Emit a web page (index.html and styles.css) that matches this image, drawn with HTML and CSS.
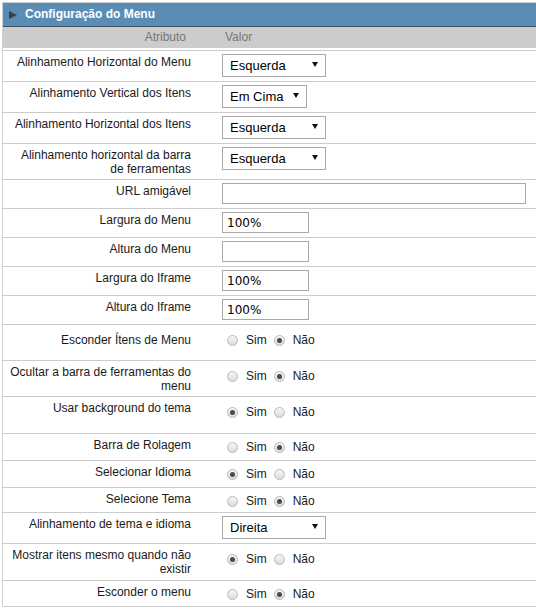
FILE: index.html
```html
<!DOCTYPE html>
<html lang="pt">
<head>
<meta charset="utf-8">
<title>Configuração do Menu</title>
<link rel="stylesheet" href="styles.css">
</head>
<body>
<div class="panel">
  <div class="title"><span class="title-arrow"></span>Configuração do Menu</div>
  <div class="head">
    <div class="head-label">Atributo</div>
    <div class="head-value">Valor</div>
  </div>
  <div class="rows">
    <div class="row h31">
      <div class="label">Alinhamento Horizontal do Menu</div>
      <div class="value"><span class="select w104"><select><option>Esquerda</option></select></span></div>
    </div>
    <div class="row h31">
      <div class="label">Alinhamento Vertical dos Itens</div>
      <div class="value"><span class="select w85"><select><option>Em Cima</option></select></span></div>
    </div>
    <div class="row h31">
      <div class="label">Alinhamento Horizontal dos Itens</div>
      <div class="value"><span class="select w104"><select><option>Esquerda</option></select></span></div>
    </div>
    <div class="row h36">
      <div class="label">Alinhamento horizontal da barra de ferramentas</div>
      <div class="value"><span class="select w104"><select><option>Esquerda</option></select></span></div>
    </div>
    <div class="row h29">
      <div class="label">URL amigável</div>
      <div class="value"><input class="text wide" type="text" value=""></div>
    </div>
    <div class="row h29">
      <div class="label">Largura do Menu</div>
      <div class="value"><input class="text" type="text" value="100%"></div>
    </div>
    <div class="row h29">
      <div class="label">Altura do Menu</div>
      <div class="value"><input class="text" type="text" value=""></div>
    </div>
    <div class="row h29">
      <div class="label">Largura do Iframe</div>
      <div class="value"><input class="text" type="text" value="100%"></div>
    </div>
    <div class="row h29">
      <div class="label">Altura do Iframe</div>
      <div class="value"><input class="text" type="text" value="100%"></div>
    </div>
    <div class="row h36">
      <div class="label low">Esconder Ítens de Menu</div>
      <div class="value radios"><input class="radio" type="radio" name="r1"><span class="opt">Sim</span><input class="radio" type="radio" name="r1" checked><span class="opt">Não</span></div>
    </div>
    <div class="row h36">
      <div class="label">Ocultar a barra de ferramentas do menu</div>
      <div class="value radios"><input class="radio" type="radio" name="r2"><span class="opt">Sim</span><input class="radio" type="radio" name="r2" checked><span class="opt">Não</span></div>
    </div>
    <div class="row h37">
      <div class="label">Usar background do tema</div>
      <div class="value radios"><input class="radio" type="radio" name="r3" checked><span class="opt">Sim</span><input class="radio" type="radio" name="r3"><span class="opt">Não</span></div>
    </div>
    <div class="row h27 compact">
      <div class="label">Barra de Rolagem</div>
      <div class="value radios"><input class="radio" type="radio" name="r4"><span class="opt">Sim</span><input class="radio" type="radio" name="r4" checked><span class="opt">Não</span></div>
    </div>
    <div class="row h27 compact">
      <div class="label">Selecionar Idioma</div>
      <div class="value radios"><input class="radio" type="radio" name="r5" checked><span class="opt">Sim</span><input class="radio" type="radio" name="r5"><span class="opt">Não</span></div>
    </div>
    <div class="row h25 compact">
      <div class="label">Selecione Tema</div>
      <div class="value radios"><input class="radio" type="radio" name="r6"><span class="opt">Sim</span><input class="radio" type="radio" name="r6" checked><span class="opt">Não</span></div>
    </div>
    <div class="row h31">
      <div class="label">Alinhamento de tema e idioma</div>
      <div class="value"><span class="select w104"><select><option>Direita</option></select></span></div>
    </div>
    <div class="row h37">
      <div class="label">Mostrar itens mesmo quando não existir</div>
      <div class="value radios"><input class="radio" type="radio" name="r7" checked><span class="opt">Sim</span><input class="radio" type="radio" name="r7"><span class="opt">Não</span></div>
    </div>
    <div class="row h25 compact">
      <div class="label">Esconder o menu</div>
      <div class="value radios"><input class="radio" type="radio" name="r8"><span class="opt">Sim</span><input class="radio" type="radio" name="r8" checked><span class="opt">Não</span></div>
    </div>
  </div>
</div>
</body>
</html>
```

FILE: styles.css
```css
html, body {
  margin: 0;
  padding: 0;
  overflow: hidden;
  background: #fff;
}

body {
  font-family: "Liberation Sans", Arial, sans-serif;
  font-size: 12px;
  color: #1a1a1a;
}

.panel {
  box-sizing: border-box;
  width: 535px;
  margin: 2px 0 0 2px;
  border: 1px solid #cfcfcf;
}

.title {
  display: flex;
  align-items: center;
  height: 23px;
  background: #5a8db6;
  border-bottom: 1px solid #3b4d5b;
  color: #fff;
  font-weight: bold;
  font-size: 12px;
  line-height: 23px;
}

.title-arrow {
  width: 0;
  height: 0;
  border-top: 4px solid transparent;
  border-bottom: 4px solid transparent;
  border-left: 8px solid #3e3e3e;
  margin: 0 8px 0 6px;
}

.head {
  display: grid;
  grid-template-columns: 215px 1fr;
  height: 21px;
  line-height: 21px;
  background: #cccccc;
  border-bottom: 2px solid #fff;
  color: #777;
}

.head-label {
  text-align: right;
  padding-right: 32px;
}

.head-value {
  padding-left: 7px;
}

.rows {
  border-top: 1px solid #cccccc;
}

.row {
  box-sizing: border-box;
  display: grid;
  grid-template-columns: 215px 1fr;
  border-bottom: 1px solid #cccccc;
}

.row:last-child {
  border-bottom: none;
}

.h25 { height: 25px; }
.h27 { height: 27px; }
.h29 { height: 29px; }
.h31 { height: 31px; }
.h36 { height: 36px; }
.h37 { height: 37px; }

.label {
  text-align: right;
  padding: 4px 27px 0 4px;
}

.label.low {
  padding-top: 8px;
}

.value {
  padding: 3px 0 0 4px;
}

.select {
  position: relative;
  display: inline-block;
}

.select select {
  -webkit-appearance: none;
  appearance: none;
  box-sizing: border-box;
  display: block;
  height: 23px;
  margin: 0;
  padding: 0 0 0 7px;
  border: 1px solid #a9a9a9;
  border-radius: 0;
  background: #fff;
  color: #000;
  font-family: "Liberation Sans", Arial, sans-serif;
  font-size: 13px;
}

.select::after {
  content: "";
  position: absolute;
  top: 8px;
  right: 8px;
  width: 0;
  height: 0;
  border-left: 3px solid transparent;
  border-right: 3px solid transparent;
  border-top: 5px solid #111;
  pointer-events: none;
}

.w104 select { width: 104px; }
.w85 select { width: 85px; }

.text {
  box-sizing: border-box;
  display: block;
  width: 87px;
  height: 21px;
  margin: 0;
  padding: 0 4px;
  border: 1px solid #a9a9a9;
  border-radius: 0;
  background: #fff;
  color: #000;
  font-family: "DejaVu Sans", Verdana, sans-serif;
  font-size: 12px;
}

.text.wide {
  width: 304px;
}

.radios {
  display: flex;
  align-items: center;
  align-self: start;
  padding-top: 8px;
  line-height: 14px;
}

.compact .radios {
  padding-top: 6px;
}

.radio {
  -webkit-appearance: none;
  appearance: none;
  box-sizing: border-box;
  position: relative;
  flex: none;
  width: 11px;
  height: 11px;
  margin: 0 8px 0 5px;
  border: 1px solid #b9b9b9;
  border-radius: 50%;
  background: linear-gradient(#f6f6f6, #dcdcdc);
}

.radio:checked::after {
  content: "";
  position: absolute;
  left: 2px;
  top: 2px;
  width: 5px;
  height: 5px;
  border-radius: 50%;
  background: #4a4a4a;
}

.opt {
  color: #1a1a1a;
  font-size: 12px;
}

.opt + .radio {
  margin-left: 7px;
}
```
